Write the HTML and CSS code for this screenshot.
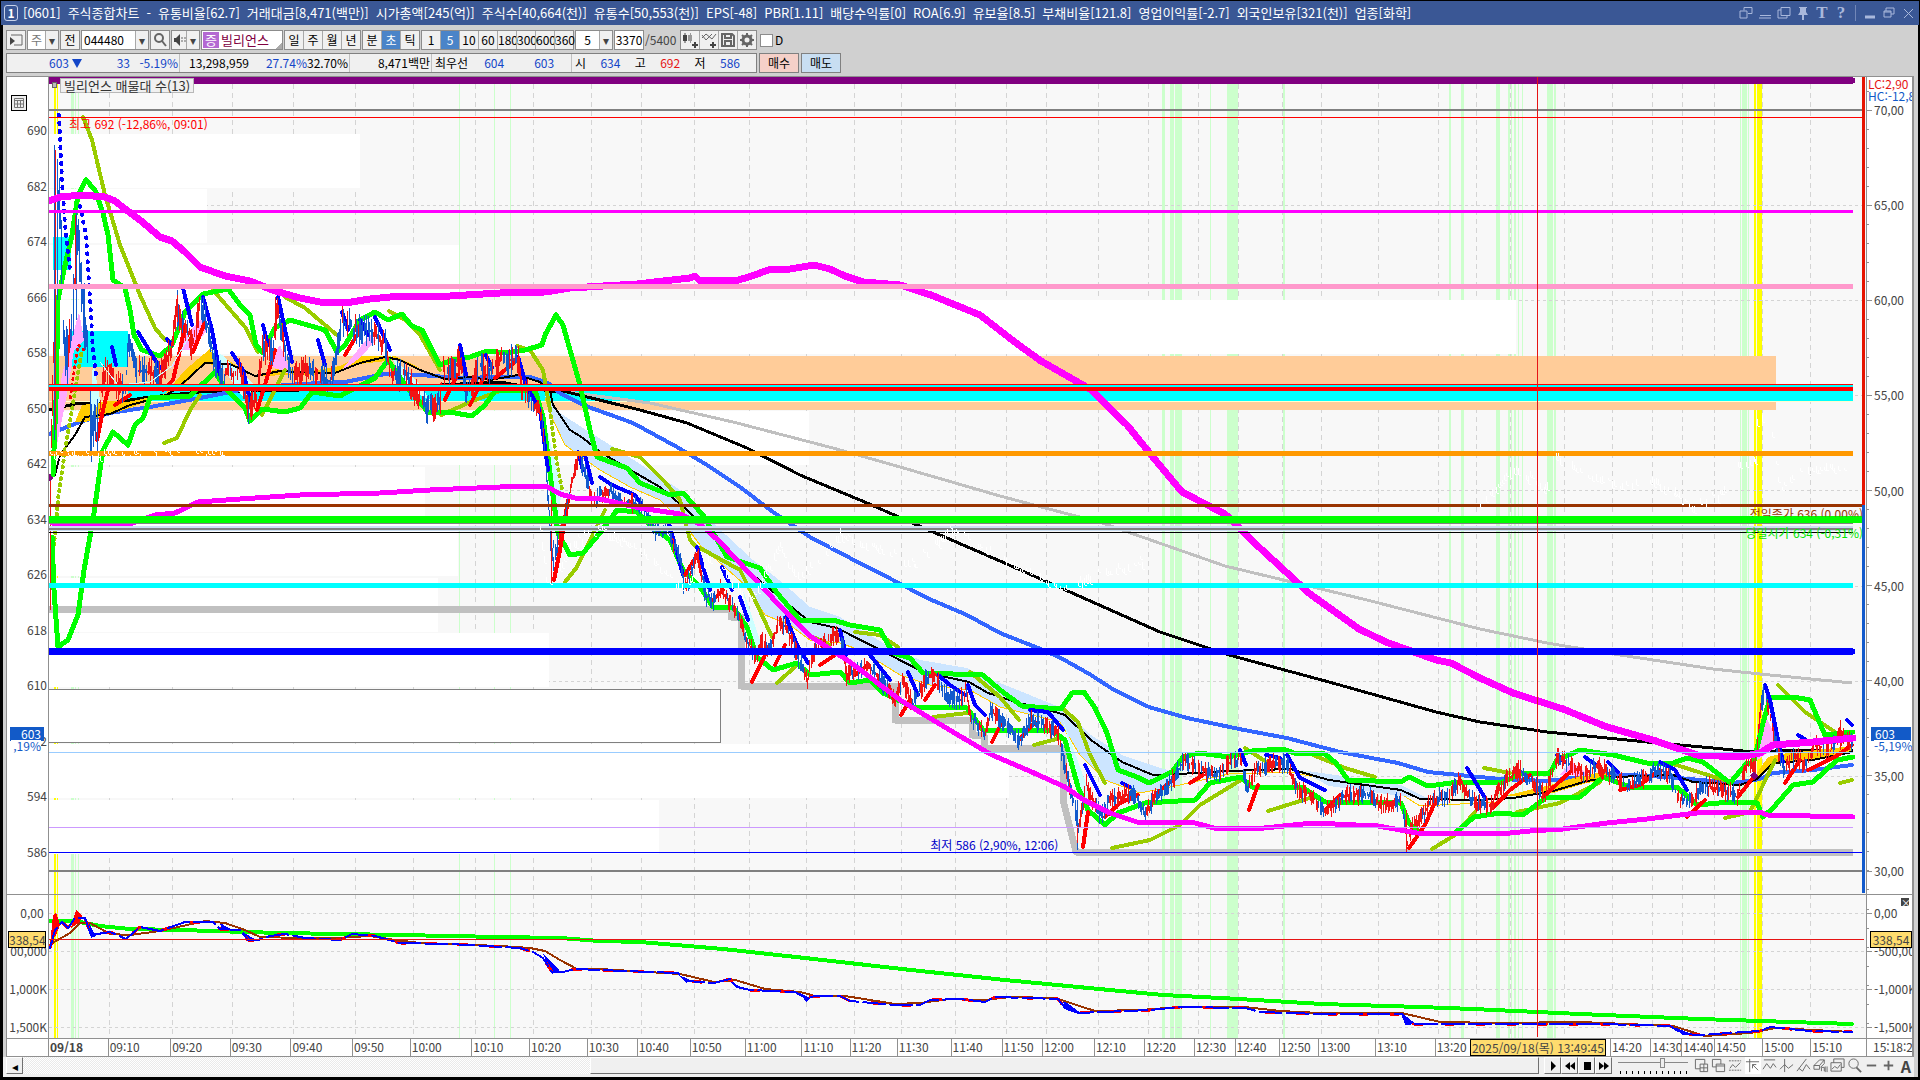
FILE: index.html
```html
<!DOCTYPE html>
<html lang="ko">
<head>
<meta charset="utf-8">
<title>[0601] 주식종합차트</title>
<link rel="stylesheet" href="styles.css">
</head>
<body>
<header class="titlebar">
  <span class="badge">1</span>
  <h1 class="title"><span>[0601]</span><span>주식종합차트</span><span>-</span><span>유통비율[62.7]</span><span>거래대금[8,471(백만)]</span><span>시가총액[245(억)]</span><span>주식수[40,664(천)]</span><span>유통수[50,553(천)]</span><span>EPS[-48]</span><span>PBR[1.11]</span><span>배당수익률[0]</span><span>ROA[6.9]</span><span>유보율[8.5]</span><span>부채비율[121.8]</span><span>영업이익률[-2.7]</span><span>외국인보유[321(천)]</span><span>업종[화학]</span></h1>
  <div class="win-tools">
    <button aria-label="창 분리"><svg width="14" height="14" viewBox="0 0 14 14"><path d="M5 1.500h8v6H9M5 1.500v3M1 5h7v7H1z"/></svg></button>
    <button aria-label="접기"><svg width="14" height="14" viewBox="0 0 14 14"><path d="M2 9.500h11M1 12h12"/></svg></button>
    <button aria-label="복사"><svg width="14" height="14" viewBox="0 0 14 14"><path d="M4 1.500h9v8H4zM4 4H1v8h9V10"/></svg></button>
    <button aria-label="고정"><svg width="14" height="14" viewBox="0 0 14 14"><path class="solid" d="M3 1h8v1h-1v4l2 3H2l2-3V2H3zM6 9h2v5H6z"/></svg></button>
    <button class="serif">T</button>
    <button class="serif">?</button>
    <i class="divider"></i>
    <button aria-label="최소화"><svg width="14" height="14" viewBox="0 0 14 14"><path d="M2 11h10" stroke-width="3"/></svg></button>
    <button aria-label="이전 크기"><svg width="14" height="14" viewBox="0 0 14 14"><path d="M4 5V2h8v6H9M2 5h7v6H2zM2 6h7"/></svg></button>
    <button aria-label="닫기"><svg width="14" height="14" viewBox="0 0 14 14"><path d="M3 3l9 9M12 3l-9 9"/></svg></button>
  </div>
</header>

<div class="window">
<nav class="toolbar">
  <button class="ctl sq" aria-label="패널"><svg width="14" height="14" viewBox="0 0 14 14"><path class="ln" d="M2 2h11v10H5"/><path d="M1 4l5 4-5 4z"/></svg></button>
  <div class="ctl group combo w32"><button class="gray">주</button><button class="arrow" aria-label="목록">▾</button></div>
  <button class="ctl sq">전</button>
  <div class="ctl group combo w68"><input class="field" value="044480" aria-label="종목코드"><button class="arrow" aria-label="종목 목록">▾</button></div>
  <button class="ctl sq" aria-label="검색"><svg width="14" height="14" viewBox="0 0 14 14"><circle class="ln2" cx="6" cy="5" r="4"/><path class="ln2" d="M9 8l4 5"/></svg></button>
  <div class="ctl group w28"><button aria-label="소리"><svg width="13" height="14" viewBox="0 0 13 14"><path d="M1 5h2l4-4v12l-4-4H1z"/><path class="ln" d="M9 4v6M12 4v6" stroke-dasharray="2 1"/></svg></button><button class="arrow" aria-label="소리 설정">▾</button></div>
  <div class="ctl group name"><span class="tag">증</span><span class="stock">빌리언스</span></div>
  <div class="ctl group w77"><button>일</button><button>주</button><button>월</button><button>년</button></div>
  <div class="ctl group w58"><button>분</button><button class="on">초</button><button>틱</button></div>
  <div class="ctl group w153"><button>1</button><button class="on">5</button><button>10</button><button>60</button><button>180</button><button>300</button><button>600</button><button>3600</button></div>
  <div class="ctl group combo w38"><input class="field mid" value="5" aria-label="주기"><button class="arrow" aria-label="주기 목록">▾</button></div>
  <div class="ctl group combo w30"><input class="field mid" value="3370" aria-label="표시 개수"></div>
  <span class="total">/5400</span>
  <div class="ctl group w77">
    <button aria-label="차트 추가"><svg width="16" height="16" viewBox="0 0 16 16"><path d="M1 3h4v6H1zM2.500 1h1v10h-1z"/><path fill="#999" d="M6 3h4v6H6zM8 1h1v10H8z"/><path d="M10 12h2v-2h2v2h2v2h-2v2h-2v-2h-2z"/></svg></button>
    <button aria-label="지표 추가"><svg width="16" height="16" viewBox="0 0 16 16"><path class="ln" d="M1 6l4-4 6 5 4-5M1 3l4 5 6-6"/><path d="M9 12h2v-2h2v2h2v2h-2v2h-2v-2H9z"/></svg></button>
    <button aria-label="저장"><svg width="16" height="16" viewBox="0 0 16 16"><path class="ln2" d="M2 2h10l2 2v10H2zM5 2v4h6V2M5 14V9h6v5"/></svg></button>
    <button aria-label="설정"><svg width="16" height="16" viewBox="0 0 16 16"><circle class="ln3" cx="8" cy="8" r="4"/><path class="ln2" d="M8 1v3M8 12v3M1 8h3M12 8h3M3 3l2 2M11 11l2 2M13 3l-2 2M5 11l-2 2"/></svg></button>
  </div>
  <label class="check"><input type="checkbox">D</label>
</nav>

<section class="quote">
  <div class="strip">
    <span class="cell c173 blue"><b>603</b><i class="tri"></i><b class="w48">33</b><b class="w48">-5.19%</b></span>
    <span class="cell c170"><b class="w68">13,298,959</b><b class="blue w58">27.74%</b><b class="w41">32.70%</b></span>
    <span class="cell c82"><b>8,471백만</b></span>
    <span class="cell c140 left"><b>최우선</b><b class="blue w36">604</b><b class="blue w50">603</b></span>
    <span class="cell c184 left spread"><b>시</b><b class="blue">634</b><b>고</b><b class="red">692</b><b>저</b><b class="blue">586</b></span>
  </div>
  <button class="trade buy">매수</button>
  <button class="trade sell">매도</button>
</section>

<main class="chart">
  <div class="axis left main-row">
    <button class="grid-btn" aria-label="표 보기"><svg width="14" height="14" viewBox="0 0 14 14"><path d="M2.500 2.500h9v9h-9zM2.500 4.500h9M2.500 8h9M5.500 4v8M8.500 4v8"/></svg></button>
    <ol class="ticks price"><li>690</li><li>682</li><li>674</li><li>666</li><li>658</li><li>650</li><li>642</li><li>634</li><li>626</li><li>618</li><li>610</li><li>602</li><li>594</li><li>586</li></ol>
    <span class="now">603</span><span class="pct">,19%</span>
  </div>
  <div class="axis left sub-row">
    <ol class="ticks vol"><li>0,00&nbsp;</li><li>00,000</li><li>1,000K</li><li>1,500K</li></ol>
    <span class="mark">338,54</span>
  </div>
  <div class="plot">
    <svg id="plot" viewBox="49 77 1817 961" preserveAspectRatio="none" shape-rendering="crispEdges"></svg>
    <i class="handle"></i>
    <span class="legend">빌리언스 매물대 수(13)</span>
    <span class="note high">최고 692 (-12,86%, 09:01)</span>
    <span class="note low">최저 586 (2,90%, 12:06)</span>
    <span class="note prev">전일종가 636 (0,00%)</span>
    <span class="note open">당일시가 634 (-0,31%)</span>
  </div>
  <div class="axis right main-row">
    <p class="lc">LC:2,90</p><p class="hc">HC:-12,86</p>
    <ol class="ticks pctscale"><li>70,00</li><li>65,00</li><li>60,00</li><li>55,00</li><li>50,00</li><li>45,00</li><li>40,00</li><li>35,00</li><li>30,00</li></ol>
    <span class="now">603</span><span class="pct">-5,19%</span>
  </div>
  <div class="axis right sub-row">
    <button class="close" aria-label="지표 닫기">×</button>
    <ol class="ticks vol"><li>0,00</li><li>-500,00</li><li>-1,000K</li><li>-1,500K</li></ol>
    <span class="mark">338,54</span>
  </div>
  <div class="corner"></div>
  <ol class="times" id="times"></ol>
  <div class="end">15:18:2</div>
</main>

<footer class="bottom">
  <div class="scroll"><button class="raised" aria-label="왼쪽">◂</button><i class="track"></i><i class="thumb"></i></div>
  <div class="play">
    <button class="raised" aria-label="재생"><svg width="12" height="10" viewBox="0 0 12 10"><path d="M4 0l5 5-5 5z"/></svg></button>
    <button class="raised" aria-label="뒤로"><svg width="12" height="10" viewBox="0 0 12 10"><path d="M6 1v8L1 5zM11 1v8L6 5z"/></svg></button>
    <button class="raised" aria-label="정지"><svg width="12" height="10" viewBox="0 0 12 10"><path d="M3 1h7v8H3z"/></svg></button>
    <button class="raised" aria-label="앞으로"><svg width="12" height="10" viewBox="0 0 12 10"><path d="M1 1v8l5-4zM6 1v8l5-4z"/></svg></button>
  </div>
  <input class="speed" type="range" min="0" max="10" step="0.1" value="6.5" aria-label="속도">
  <div class="tools">
    <button aria-label="분할"><svg viewBox="0 0 16 16"><path d="M1.500 1.500h10v10h-10z"/><path fill="#eee" d="M6.500 6.500h8v8h-8zM10.500 6.500v8M6.500 10.500h8"/></svg></button>
    <button aria-label="겹치기"><svg viewBox="0 0 16 16"><path d="M1.500 1.500h9v8h-9z"/><path fill="#eee" d="M5.500 6.500h9v8h-9zM5.500 8.500h9"/></svg></button>
    <button aria-label="영역"><svg viewBox="0 0 16 16"><path d="M1 3h13M1 13h13" stroke-dasharray="2 1"/><path d="M2 11l3-4 3 3 5-5"/></svg></button>
    <button class="on" aria-label="십자선"><svg viewBox="0 0 16 16"><path d="M1 4h14M5 1v14M8 7l6 6M8 7h4M8 7v4"/></svg></button>
    <button aria-label="수평선"><svg viewBox="0 0 16 16"><path d="M2 2h12M1 12l4-6 4 5 3-5 3 4"/></svg></button>
    <button aria-label="수직선"><svg viewBox="0 0 16 16"><path d="M6 1v14M1 12l5-5 4 4 5-4"/></svg></button>
    <button aria-label="추세선"><svg viewBox="0 0 16 16"><path d="M1 14L11 1M3 11l4 3 4-7 4 5"/></svg></button>
    <button aria-label="모두 지우기"><svg viewBox="0 0 16 16"><path d="M1 8l6-6h5l-5 6v4H1zM1 8h6M12 2v4l-4 4M9 14v-4h3v4M13 9v6M15 9v6"/></svg></button>
    <button aria-label="그림"><svg viewBox="0 0 16 16"><path d="M4 5V1h11v9h-3M1 5h11v9H1zM2 12l3-3 3 2 3-4"/></svg></button>
    <button aria-label="돋보기"><svg viewBox="0 0 16 16"><circle cx="7" cy="6" r="5"/><path d="M10 10l5 5" stroke-width="2"/></svg></button>
    <button aria-label="축소"><svg viewBox="0 0 16 16"><path d="M3 8h10" stroke-width="2"/></svg></button>
    <button aria-label="확대"><svg viewBox="0 0 16 16"><path d="M3 8h10M8 3v10" stroke-width="2"/></svg></button>
    <button class="auto">A</button>
  </div>
</footer>
</div>
<script src="chart.js"></script>
</body>
</html>
```
FILE: styles.css
```css
* { box-sizing: border-box; margin: 0; padding: 0; }
html, body { height: 100%; }
body {
  display: flex; flex-direction: column; min-height: 480px; padding: 1px 1px 3px 3px;
  background: #000; color: #000; overflow: hidden;
  font: 12px/16px "Liberation Sans Narrow", "Noto Sans CJK KR", sans-serif;
}
button, input { font: inherit; color: inherit; border: 0; background: none; border-radius: 0; min-width: 0; }
ol { list-style: none; }
i { font-style: normal; }
b { font-weight: normal; }

.titlebar { display: flex; align-items: center; flex: none; height: 24px; margin-left: -2px; padding: 0 4px 0 3px; background: #3a5795; color: #fff; }
.badge { width: 14px; height: 16px; line-height: 14px; border: 1px solid #c8d2ea; border-radius: 3px; text-align: center; font-weight: bold; }
.title { display: flex; flex: 1; gap: 7px; margin-left: 5px; font-size: 13px; font-weight: normal; white-space: nowrap; }
.win-tools { display: flex; align-items: center; gap: 5px; color: #a9b8dc; }
.win-tools button { width: 14px; height: 16px; }
.win-tools svg { display: block; fill: none; stroke: #a9b8dc; }
.win-tools .solid { fill: #a9b8dc; stroke: none; }
.win-tools .divider { width: 1px; height: 16px; margin: 0 2px; background: #7287b8; }
.win-tools .serif { font: bold 17px/16px "Liberation Serif", serif; }

.window { display: flex; flex: 1; flex-direction: column; min-height: 0; margin-right: 1px; background: #d0d0d0; }
.toolbar { display: flex; flex: none; gap: 1px; height: 28px; padding: 5px 3px 3px; }
.ctl { height: 20px; border: 1px solid #8c8c8c; background: #f0f0f0; }
.ctl svg { display: block; margin: auto; fill: #444; }
.ctl .ln, .ctl .ln2, .ctl .ln3 { fill: none; stroke: #666; }
.ctl .ln2 { stroke-width: 2; }
.ctl .ln3 { stroke-width: 3; }
.sq { width: 20px; }
.group { display: flex; align-items: stretch; }
.group button { flex: 1; white-space: nowrap; overflow: visible; }
.group button + button { border-left: 1px solid #a8a8a8; }
.group .arrow { flex: 0 0 13px; border-left: 1px solid #a8a8a8; background: #f0f0f0; color: #444; }
.group .on { background: #4a84c8; color: #fff; }
.combo { background: #fff; }
.gray { color: #777; }
.field { flex: 1; width: 0; padding: 0 2px; }
.mid { text-align: center; padding: 0; }
.w28 { width: 29px; } .w30 { width: 30px; } .w32 { width: 32px; } .w38 { width: 38px; }
.w58 { width: 58px; } .w68 { width: 68px; } .w77 { width: 77px; } .w153 { width: 153px; }
.name { width: 82px; gap: 2px; padding: 1px; color: #800040; font-size: 13px; background: linear-gradient(135deg, #fff 93%, #aaa 93%); }
.tag { width: 16px; background: #b469d2; color: #fff; text-align: center; }
.total { width: 34px; line-height: 20px; color: #444; }
.check { display: flex; align-items: center; gap: 2px; margin-left: 2px; }
.check input { appearance: none; width: 13px; height: 13px; border: 1px solid #8c8c8c; background: #fff; }

.quote { display: flex; flex: none; gap: 2px; height: 23px; padding: 0 3px 3px; }
.strip { display: flex; width: 751px; border: 1px solid #808080; background: #f0f0f0; }
.cell { display: flex; align-items: center; justify-content: flex-end; padding: 0 1px; border-right: 1px solid #c0c0c0; white-space: nowrap; text-align: right; }
.cell.left { justify-content: flex-start; padding-left: 3px; }
.cell.spread { flex: 1; justify-content: space-between; padding-right: 16px; border: 0; }
.c173 { width: 173px; } .c170 { width: 170px; } .c82 { width: 82px; } .c140 { width: 140px; } .c184 { width: 184px; }
.strip .w36 { width: 36px; } .strip .w41 { width: 41px; } .strip .w48 { width: 48px; } .strip .w50 { width: 50px; }
.strip .w58 { width: 58px; }
.blue { color: #1446c8; } .red { color: #e61414; }
.tri { margin-left: 3px; border: 5px solid transparent; border-top: 9px solid #1446c8; border-bottom: 0; }
.trade { width: 40px; border: 1px solid #808080; }
.buy { background: #f5d0c8; } .sell { background: #c8def2; }

.chart {
  display: grid; flex: 1; min-height: 0; margin: 0 4px 0 3px; background: #fff;
  grid-template: minmax(0, 817fr) minmax(0, 144fr) 18px / 42px minmax(0, 1fr) 46px;
  border: 1px solid #909090; border-width: 1px 2px 1px 1px; color: #444;
}
.axis { position: relative; display: flex; flex-direction: column; overflow: hidden; }
.axis.left { grid-column: 1; border-right: 1px solid #909090; text-align: right; }
.axis.right { grid-column: 3; border-left: 1px solid #909090; }
.main-row { grid-row: 1; }
.sub-row { grid-row: 2; border-top: 1px solid #909090; }
.ticks { display: flex; flex: 1; flex-direction: column; justify-content: space-between; line-height: 14px; }
.left .ticks { padding-right: 1px; }
.price { margin: 46px 0 35px; }
.pctscale { margin: 26px 0 16px; }
.vol { margin: 11px 0 4px; }
.right li { display: flex; align-items: center; gap: 2px; white-space: nowrap; }
.right li::before { content: ""; flex: none; width: 5px; height: 1px; background: #909090; }
.right { background: repeating-linear-gradient(to bottom, #909090 0 1px, transparent 1px 19px) 0 14px / 2px 100% no-repeat; }
.now, .pct, .mark, .lc, .hc, .grid-btn, .close { position: absolute; }
.now { top: 79.6%; left: 3px; width: 34px; height: 14px; padding-right: 3px; background: #125ac8; color: #fff; line-height: 14px; }
.pct { top: 81.2%; left: 4px; width: 34px; line-height: 12px; color: #125ac8; background: #fff; }
.left .pct { width: 30px; }
.right .now { left: 4px; width: 40px; padding: 0 4px; }
.right .pct { left: 7px; width: 36px; }
.mark { top: 25%; left: 1px; width: 38px; height: 17px; border: 1px solid #000; background: #ffdc6e; line-height: 15px; text-align: center; }
.right .mark { left: 3px; width: 42px; }
.lc, .hc { left: 1px; line-height: 12px; }
.lc { top: 1px; color: #e61414; } .hc { top: 13px; color: #125ac8; }
.grid-btn { top: 19px; left: 5px; width: 14px; height: 14px; outline: 1px solid #000; background: #eee; }
.grid-btn svg { display: block; fill: none; stroke: #777; }
.close { top: 3px; right: 3px; width: 8px; height: 8px; background: #444; color: #fff; font-size: 10px; line-height: 7px; }

.plot { position: relative; grid-area: 1 / 2 / 3 / 3; overflow: hidden; background: #f8f8f8; }
.plot svg { position: absolute; width: 100%; height: 100%; }
.handle { position: absolute; top: 5px; left: 3px; width: 5px; height: 6px; border: 1px solid #666; background: #bbb; }
.legend { position: absolute; top: 1px; left: 11px; padding: 0 3px; border: 1px solid #b8b8b8; background: #f0f0f0; font-size: 13px; line-height: 13px; white-space: nowrap; color: #333; }
.note { position: absolute; line-height: 14px; white-space: nowrap; }
.high { top: 4.2%; left: 20px; color: #f00; }
.low { top: 79.2%; left: 48.5%; color: #0000c8; }
.prev { top: 44.7%; right: 3px; color: #993300; clip-path: inset(0 0 4px); }
.open { top: 46.7%; right: 3px; color: #00e600; }

.corner, .times, .end { grid-row: 3; border-top: 1px solid #909090; line-height: 16px; }
.corner { border-right: 1px solid #909090; }
.times { position: relative; display: flex; }
.times li { flex: var(--w) 0 0; min-width: 0; padding-left: 1px; border-left: 1px solid #909090; white-space: nowrap; overflow: hidden; }
.times li:first-child { border: 0; font-weight: bold; }
.times .stamp { position: absolute; top: 0; left: 78.2%; width: 136px; height: 17px; padding: 0; overflow: visible; border: 1px solid #000; background: #ffdc6e; line-height: 15px; text-align: center; font-weight: normal; }
.end { padding-left: 6px; overflow: hidden; border-left: 1px solid #909090; }

.bottom { display: flex; flex: none; height: 20px; margin-right: 4px; padding: 0 0 3px 3px; background: #f0f0f0; }
.scroll { display: flex; flex: 1; background: repeating-conic-gradient(#fff 0 25%, #eaeaea 0 50%) 0 0 / 2px 2px; }
.raised { width: 17px; height: 17px; border: 1px solid; border-color: #fff #707070 #707070 #fff; background: #f0f0f0; line-height: 12px; }
.track { flex: 568; }
.thumb { flex: 950; border: 1px solid; border-color: #fff #707070 #707070 #fff; background: #f0f0f0; }
.play { display: flex; margin-left: 5px; }
.play svg { display: block; margin: auto; }
.speed {
  appearance: none; width: 70px; height: 17px; margin: 0 6px;
  background: linear-gradient(#888, #888) 0 5px / 100% 1px no-repeat, repeating-linear-gradient(to right, #000 0 1px, transparent 1px 6px) 2px 14px / 100% 3px no-repeat;
}
.speed::-webkit-slider-thumb { appearance: none; width: 5px; height: 10px; margin-top: -5px; border: 1px solid #888; background: #eee; }
.tools { display: flex; width: 220px; justify-content: space-between; }
.tools button { width: 16px; height: 17px; }
.tools .on { background: #fff; }
.tools svg { display: block; width: 15px; height: 15px; fill: none; stroke: #666; }
.tools .auto { font-weight: bold; font-size: 16px; color: #444; }
```
FILE: chart.js
```js
const NS = 'http://www.w3.org/2000/svg';
const svg = document.getElementById('plot');
const R = 1853, FULL = 1864;

function add(tag, attrs) {
  const el = document.createElementNS(NS, tag);
  for (const k in attrs) el.setAttribute(k, attrs[k]);
  svg.appendChild(el);
}
const rect = (x, y, w, h, fill) => add('rect', { x, y, width: w, height: h, fill });
const line = (d, stroke, w, extra) => add('path', Object.assign({ d, stroke, 'stroke-width': w, fill: 'none', 'stroke-linejoin': 'round' }, extra));
const curve = (pts, stroke, w, extra) => line('M' + pts, stroke, w, Object.assign({ 'stroke-linecap': 'round' }, extra));
const poly = (pts, fill) => add('polygon', { points: pts, fill });
const hl = (y, c, w, x1 = 49, x2 = R) => rect(x1, y, x2 - x1, w, c);

let seed = 7;
function rnd() { seed = (seed * 16807) % 2147483647; return seed / 2147483647; }

/* time axis */
const marks = [49, 109, 172, 232, 293, 355, 413, 475, 533, 591, 641, 694, 749, 806, 854, 901, 955, 1006, 1046, 1098, 1148, 1198, 1238, 1282, 1321, 1378, 1438, 1476, 1510, 1564, 1612, 1652, 1682, 1714, 1762, 1810, 1866];
const names = ['09/18', '09:10', '09:20', '09:30', '09:40', '09:50', '10:00', '10:10', '10:20', '10:30', '10:40', '10:50', '11:00', '11:10', '11:20', '11:30', '11:40', '11:50', '12:00', '12:10', '12:20', '12:30', '12:40', '12:50', '13:00', '13:10', '13:20', '', '', '', '14:20', '14:30', '14:40', '14:50', '15:00', '15:10'];
document.getElementById('times').innerHTML = names.map((n, i) => `<li style="--w:${marks[i + 1] - marks[i]}">${n}</li>`).join('') + '<li class="stamp">2025/09/18(목) 13:49:45</li>';

/* grid and session bands */
[[71, 3], [75, 1], [78, 1], [459, 1], [494, 1], [510, 1], [1162, 3], [1170, 4], [1175, 7], [1210, 1], [1227, 11], [1283, 2], [1449, 2], [1461, 3], [1496, 4], [1508, 2], [1511, 1], [1514, 2], [1518, 1], [1522, 1], [1547, 6], [1554, 2], [1740, 1], [1742, 5], [1748, 1]].forEach(b => rect(b[0], 77, b[1], 961, '#ccffcc'));
[[54, 2], [57, 1], [1754, 2], [1757, 5]].forEach(b => rect(b[0], 77, b[1], 961, '#ffff00'));
const dash = { 'stroke-dasharray': '5 4' };
marks.slice(1, -1).forEach(x => line(`M${x}.5 84V1038`, '#d4d4d4', 1, dash));
[110, 205, 300, 395, 490, 586, 681, 776, 871, 913, 951, 989, 1027].forEach(y => line(`M49 ${y}.5H1864`, '#d4d4d4', 1, { 'stroke-dasharray': '3 3' }));

/* volume by price */
[[134, 360], [189, 207], [245, 459], [300, 1516], [411, 809], [467, 425], [522, 458], [578, 438], [633, 549], [744, 1009], [800, 659]].forEach(b => rect(49, b[0], b[1] - 49, 54, '#fff'));
rect(49, 356, 1727, 54, '#ffcc99');
add('rect', { x: 40.5, y: 689.5, width: 680, height: 53, fill: '#fff', stroke: '#808080' });

/* level lines */
rect(53, 237, 18, 33, '#00ffff'); rect(72, 331, 56, 36, '#00ffff');
hl(391, '#00ffff', 10, 128); hl(401, '#ffffcc', 1);
line('M49 609H731V617H741V686H895V720H972V735H984V748H1063V800L1076 852H1853', '#c0c0c0', 7);
line('M567 392L650 403 733 422 833 448 900 467 1000 496 1102 523 1225 566 1367 600 1480 629 1547 643 1620 655 1713 669 1760 674 1852 683', '#c0c0c0', 3);
curve('49 410 75 404 110 403 150 397 200 392 300 390 400 387 500 382 550 391 567 392 640 410 687 423 747 448 800 475 867 503 917 525 1000 561 1088 600 1160 632 1229 655 1329 682 1436 712 1480 722 1547 732 1647 742 1713 748 1753 752 1797 750 1852 750', '#000', 3);
curve('49 434 80 422 110 413 150 407 200 398 250 388 300 384 345 382 385 374 420 375 460 378 500 377 530 377 548 383 560 393 583 405 633 423 677 447 707 465 740 487 773 512 810 537 850 558 893 580 927 598 967 615 1000 633 1038 648 1061 658 1091 675 1114 690 1149 707 1187 718 1244 730 1287 738 1340 752 1398 763 1428 772 1500 779 1547 781 1607 774 1667 777 1733 783 1760 779 1773 773 1813 770 1852 765', '#3366ff', 4);

/* clouds */
poly('545 395 560 413 583 428 623 453 680 490 713 523 753 560 783 583 810 607 840 617 890 647 920 660 967 668 1000 683 1062 708 1091 735 1122 755 1160 768 1180 773 1180 785 1140 793 1105 780 1080 755 1060 722 1000 707 970 690 930 685 900 675 860 650 840 643 810 640 790 625 765 615 745 585 700 545 685 525 660 500 630 487 600 470 583 458 565 445 553 420', '#cce5ff');
curve('545 398 553 420 565 445 583 458 600 470 630 487 660 500 685 525 700 545 745 585 765 615 790 625 810 640 840 643 860 650 900 675 930 685 970 690 1000 707 1060 722 1080 755 1105 780 1140 793 1180 785 1229 774 1290 772 1401 794 1420 806 1500 802', '#ffcc00', 1);
poly('1300 770 1329 774 1401 785 1425 797 1440 800 1401 796 1329 786', '#cce5ff');
poly('75 422 82 405 110 401 128 402 165 394 185 370 210 349 228 360 240 368 228 366 205 364 180 388 130 408 85 422', '#ffcc00');
poly('255 376 285 366 300 373 340 366 360 356 395 356 420 368 395 360 360 364 335 374', '#ffcc00');
poly('1500 797 1550 785 1587 774 1613 772 1613 778 1587 783 1553 793', '#ffcc00');
poly('1752 780 1768 757 1780 754 1852 746 1852 752 1813 760 1773 764', '#ffcc00');
poly('51 480 58 400 62 375 79 312 84 340 74 350 66 400 56 450', '#ffaaff');
poly('170 372 185 335 203 317 207 330 192 350 182 350', '#ffaaff');
poly('268 365 280 345 292 375', '#ffaaff'); poly('340 372 370 335 376 340 360 358', '#ffaaff');
poly('1750 765 1765 715 1778 740 1775 748', '#ffaaff'); poly('1560 775 1572 762 1590 776', '#ffaaff');
poly('93 360 100 400 90 420', '#ccffff'); poly('545 420 562 490 556 530', '#ccffff'); poly('210 350 222 355 255 385 245 400', '#ccffff');
poly('390 355 420 385 430 400 410 390', '#ccffff'); poly('1063 720 1092 800 1084 800', '#ccffff'); poly('743 590 765 655 755 650', '#ccffff');
curve('55 475 60 455 75 435 85 417 110 414 130 405 165 396 180 386 205 363 230 364 255 376 280 371 300 372 335 373 360 363 385 357 400 360 420 370 445 379 470 377 490 380 518 375 540 382 550 390 553 405 570 430 583 438 600 452 627 468 660 487 687 510 713 537 747 570 783 600 810 622 837 628 890 655 923 672 969 682 988 693 1019 703 1042 708 1065 715 1091 740 1122 762 1153 775 1179 774 1229 771 1290 769 1329 780 1401 790 1420 799 1480 800 1513 798 1553 791 1587 781 1613 777 1673 775 1693 782 1740 785 1757 779 1773 763 1813 760 1852 752', '#000', 2);

/* olive trails */
['83 117 92 140 105 195 120 245 140 295 155 328 165 340', '213 290 245 327 258 352', '285 297 305 308 338 336', '164 443 177 438 190 410 200 395', '262 415 285 370', '389 311 405 320 420 335 440 370', '441 415 475 400 500 391', '517 346 530 350 543 370 550 410', '565 582 577 567 590 540 605 510', '612 449 640 457 665 482 680 500 690 540 697 548', '700 548 740 570 755 600 772 637', '777 683 797 665', '815 638 830 645', '855 632 880 635 898 647', '933 717 967 713', '970 672 1000 697 1019 720', '1034 745 1060 738', '1061 707 1078 722 1090 755 1105 783', '1112 848 1150 840 1180 825 1200 805 1241 780', '1245 748 1268 763', '1268 811 1313 797', '1313 755 1345 768 1375 777', '1432 849 1455 835 1475 812', '1484 768 1510 773', '1517 812 1560 803 1600 782', '1670 763 1730 782', '1725 818 1750 812 1775 760', '1778 685 1805 712 1835 732', '1840 783 1852 780'].forEach(p => curve(p, '#99cc00', 4));
['54 545 58 500 65 450 72 410 82 350', '550 410 555 450 562 490'].forEach(p => curve(p, '#99cc00', 4, { 'stroke-dasharray': '1 5' }));

/* bands */
curve('53 475 56 400 58 300 64 270 72 235 78 195 86 180 95 190 103 213 108 235 113 280 125 288 130 310 134 335 142 350 160 356 172 345 185 312 203 294 228 289 240 305 250 315 256 345 262 352 275 328 290 320 325 330 337 352 345 345 360 320 375 312 388 320 402 314 412 326 422 330 430 346 440 365 452 360 470 357 487 351 505 353 525 350 542 345 545 335 556 315 563 325 570 350 580 385 590 430 597 457 627 468 640 483 670 495 683 493 703 515 727 557 760 568 777 593 800 620 833 620 850 625 880 630 893 653 910 658 923 673 983 675 1000 690 1022 706 1061 709 1072 693 1084 692 1095 708 1107 733 1118 770 1137 777 1149 783 1172 772 1183 757 1199 753 1229 757 1252 751 1283 749 1294 753 1325 754 1336 763 1348 780 1401 782 1409 777 1428 786 1459 782 1500 783 1523 773 1550 773 1557 760 1580 750 1613 755 1647 763 1673 763 1687 758 1703 762 1730 783 1747 763 1753 765 1763 723 1770 698 1793 697 1810 700 1825 735 1853 732', '#00ff00', 5);
curve('52 537 54 590 58 647 68 640 78 615 84 570 93 520 100 470 103 450 113 432 128 445 135 425 143 418 150 398 190 396 215 372 225 388 245 408 250 421 262 409 285 412 300 408 312 392 340 396 375 378 388 360 405 385 418 400 428 412 455 413 472 416 485 405 495 391 535 390 543 417 550 473 558 533 570 555 583 553 600 533 617 510 637 512 650 525 670 540 683 570 700 587 713 607 733 607 747 627 757 657 773 670 797 663 810 675 840 672 850 683 870 680 883 693 913 707 967 708 983 730 1053 731 1065 740 1078 787 1088 810 1105 825 1118 813 1145 803 1195 800 1210 783 1241 777 1252 787 1302 787 1325 802 1401 803 1409 823 1420 833 1455 833 1474 817 1500 813 1523 815 1547 797 1580 797 1603 777 1630 787 1677 787 1697 805 1730 802 1757 803 1763 817 1773 808 1793 785 1813 782 1837 760 1853 757', '#00ff00', 5);

/* price bars: short ticks scattered round the traded path */
const price = [50,480,53,350,54,150,57,190,60,220,62,335,68,355,72,330,76,225,82,300,88,350,90,430,97,430,102,380,108,365,115,385,125,390,128,340,135,370,160,375,170,350,177,310,185,330,192,345,200,305,208,330,215,370,225,375,240,370,248,410,256,395,262,350,272,350,277,310,285,350,292,380,305,370,315,375,322,380,330,380,338,340,342,320,355,330,370,330,385,345,390,375,405,375,420,400,428,410,440,400,443,370,455,365,460,360,465,390,473,385,478,365,490,370,500,360,518,360,521,385,530,400,541,415,546,480,550,540,553,565,558,540,563,520,570,490,578,455,585,475,592,500,600,495,610,490,620,500,640,505,655,530,670,535,680,560,684,590,690,575,697,555,705,595,713,600,720,590,728,600,738,615,745,640,755,655,762,640,770,650,777,625,785,625,797,655,807,680,812,655,820,645,835,635,842,640,846,675,855,670,867,665,880,680,895,700,902,680,912,705,925,680,935,675,945,695,960,700,965,690,970,715,985,735,990,712,1000,720,1010,730,1019,740,1030,720,1045,725,1058,735,1065,770,1075,810,1077,840,1080,820,1086,785,1090,795,1100,815,1110,800,1125,795,1135,795,1145,815,1155,795,1165,790,1175,775,1183,760,1200,770,1215,775,1230,762,1240,760,1247,790,1255,770,1270,765,1285,762,1297,790,1310,795,1325,810,1335,805,1345,795,1370,795,1380,805,1400,800,1405,830,1406,845,1412,825,1420,820,1430,800,1450,795,1460,780,1470,800,1490,805,1505,780,1520,770,1545,795,1557,758,1570,765,1585,775,1597,765,1610,775,1625,785,1640,780,1655,770,1670,775,1677,800,1690,800,1705,785,1720,790,1738,795,1745,765,1755,765,1760,710,1764,690,1768,710,1775,740,1783,770,1795,755,1805,765,1815,745,1830,750,1840,735,1850,740];
const sar = [
  ['#0000ff', ['112 347 116 365', '138 332 160 368', '167 339 172 345', '183 288 192 325', '203 297 212 330 220 375', '232 353 243 370 250 400', '263 325 268 345', '278 297 292 362', '318 340 325 365', '342 312 348 330', '360 320 368 335', '375 317 390 350', '460 345 466 375', '486 355 492 368', '518 357 526 385 540 410 548 470', '578 452 583 470', '585 455 592 483', '600 477 612 485 635 495 645 510', '668 520 683 575', '697 547 710 590', '722 567 732 590', '740 597 748 620', '786 617 797 645 808 663', '840 630 846 655', '870 655 890 680', '908 672 918 695', '938 675 950 685 965 695', '968 685 975 705 985 715', '1030 710 1048 712 1063 730', '1085 765 1100 795', '1122 783 1130 787', '1240 750 1246 765', '1266 755 1280 758', '1287 755 1300 778 1325 790', '1467 768 1485 798', '1557 755 1565 762', '1585 757 1600 768', '1608 762 1618 772', '1660 762 1675 770 1687 790', '1765 685 1770 700 1778 740 1783 762', '1798 735 1806 740', '1847 720 1852 725']],
  ['#ff0000', ['97 440 103 410 108 390', '115 405 130 395', '163 390 173 380 180 350 185 325', '193 352 205 322', '257 410 265 385 275 350', '345 355 360 330', '445 400 457 375', '470 405 485 375', '495 378 515 362', '554 580 560 550 568 500', '685 575 697 555', '713 600 723 590', '752 682 765 655', '775 665 785 645', '820 665 835 655', '855 675 868 665', '901 715 910 700', '925 700 935 685', '992 742 1003 720', '1019 740 1035 722', '1083 847 1088 812', '1105 817 1120 803 1138 795', '1155 795 1175 778', '1190 783 1203 775', '1249 810 1258 785', '1327 808 1340 795', '1409 848 1425 825 1436 800', '1493 808 1510 790 1530 775', '1543 797 1570 772', '1620 790 1640 785 1660 770', '1687 817 1705 800', '1738 797 1755 775', '1785 783 1800 760', '1808 770 1835 757 1852 745']]
];
sar.forEach(s => s[1].forEach(p => curve(p, s[0], 4)));
['59 115 62 180 65 225 70 270', '80 206 86 235 90 300 93 350 96 375'].forEach(p => curve(p, '#0000ff', 4, { 'stroke-dasharray': '1 7' }));
curve('84 350 78 345 70 400', '#ff0000', 3, { 'stroke-dasharray': '1 5' });

let red = '', blue = '', k = 0, last = 480, up = true;
for (let x = 50; x < 1853; x += 1) {
  while (k < price.length - 4 && price[k + 2] < x) k += 2;
  const t = (x - price[k]) / (price[k + 2] - price[k]);
  const y = Math.round(price[k + 1] + t * (price[k + 3] - price[k + 1]));
  const amp = x < 100 ? 34 : x < 530 ? 17 : 11;
  const a = y - Math.round(rnd() * amp), b = y + Math.round(rnd() * amp);
  const s = `M${x}.5 ${Math.min(a, last)}V${Math.max(b, Math.min(a, last) + 2)}`;
  if (rnd() < 0.4) up = rnd() < (y < last ? 0.7 : 0.45);
  if (rnd() < 0.88) { if (up) red += s; else blue += s; }
  last = y;
}
line(blue + 'M54.5 145V440M57.5 160V300M76.5 210V320M553.5 540V548M1077.5 800V850M177.5 290V330', '#125acc', 1);
line(red + 'M50.500 480V610M55.5 150V430M75.5 215V290M551.5 500V583M275.5 297V340M1406.5 810V852M1840.5 720V750', '#f01414', 1);
curve('100 362 118 385 150 382 172 366 190 335', '#ccffff', 1);

/* main trend lines */
curve('52 523 75 523 90 525 130 524 155 515 175 513 198 502 240 499 300 495 380 493 430 490 500 487 546 486 560 494 575 498 600 499 640 508 680 514 700 524 720 542 750 574 780 606 810 636 850 662 900 700 938 723 990 754 1034 773 1065 787 1084 800 1110 813 1137 822 1191 822 1214 828 1264 828 1313 823 1378 826 1417 833 1500 834 1530 831 1563 829 1607 823 1647 819 1697 813 1760 812 1767 815 1853 817', '#ff00ff', 5);
curve('49 201 60 197 82 195 105 197 115 201 125 209 140 220 160 237 172 241 185 252 200 267 225 276 250 281 275 291 300 298 320 302 345 303 370 299 400 296 450 296 500 293 545 292 570 288 637 284 690 278 695 276 700 281 710 280 735 281 752 276 771 269 790 269 814 265 830 269 845 276 863 282 900 285 931 295 980 315 1016 343 1041 361 1090 389 1127 425 1157 462 1182 492 1225 514 1261 549 1310 594 1359 629 1386 642 1436 660 1451 663 1480 678 1513 693 1563 709 1607 727 1653 740 1697 755 1740 757 1760 753 1773 745 1813 742 1853 738', '#ff00ff', 7);

hl(77, '#800080', 7); rect(R, 78, 2, 5, '#800080');
hl(109, '#808080', 2, 49, FULL); hl(117, '#ff0000', 1, 49, FULL);
hl(210, '#ff00ff', 3); hl(284, '#ff99cc', 5);
hl(384, '#ff0000', 1); hl(385, '#00ffff', 2); hl(387, '#ff0000', 4);
hl(451, '#ff9900', 5); hl(504, '#993300', 3, 49, FULL);
hl(516, '#00ff00', 7, 49, FULL); hl(523, '#808080', 1); hl(526, '#cce0f5', 5); hl(528, '#808080', 2); hl(532, '#000', 1);
hl(583, '#00ffff', 5); hl(648, '#0000ff', 7); rect(R, 649, 2, 5, '#0000ff');
hl(752, '#99ccff', 1); hl(827, '#cc99ff', 1); hl(852, '#0000ff', 1, 49, FULL); hl(870, '#808080', 2, 49, FULL);

/* faint white trace */
const faint = [[540,530,546,580,552,590,570,545,600,530,640,550,680,590,710,560,750,600,780,550,800,580,840,535,880,550,915,565,950,530,1000,560,1060,590,1150,560], [1480,510,1500,485,1520,470,1545,490,1556,455,1580,475,1610,480,1620,490,1650,480,1675,495,1690,510,1720,495,1740,465,1755,460,1758,410,1772,440,1780,495,1800,470,1850,472], [50,455,80,455,100,457,175,455,180,447,200,453,225,458]];
faint.forEach((f, n) => {
  let d = '';
  for (let i = 0; i < f.length - 2; i += 2) for (let x = f[i]; x < f[i + 2]; x += 2) {
    const y = f[i + 1] + (x - f[i]) / (f[i + 2] - f[i]) * (f[i + 3] - f[i + 1]);
    if (rnd() < 0.55) d += `M${x}.5 ${Math.round(y - rnd() * 8)}v${2 + Math.round(rnd() * (n === 2 ? 3 : 6))}h2`;
  }
  line(d, '#fff', 1);
});
poly('50 473 53 478 50 482 47 478', '#800080'); poly('1754 771 1758 776 1754 780 1750 776', '#800080');

/* indicator pane */
rect(49, 894, 1817, 1, '#909090');
curve('49 921 75 921 100 926 130 929 180 930 280 933 400 935 500 937 560 938 600 941 640 942 676 945 723 949 805 958 911 970 1005 980 1099 989 1163 995 1239 999 1322 1004 1420 1007 1473 1009 1580 1014 1700 1019 1852 1024', '#00ff00', 4);
['50 945 53 915 56 912 60 925 56 935', '71 928 76 910 82 916 80 922'].forEach(p => poly(p, '#ff0000'));
['87 920 91 938 96 936', '220 923 222 929 232 930', '243 932 248 942 256 940', '543 954 552 974 560 970', '679 975 686 983 690 980', '729 980 736 988 742 988', '800 993 806 1002 810 998', '1062 999 1066 1010 1082 1014', '1403 1014 1406 1025 1416 1024', '1674 1027 1682 1034 1694 1035'].forEach(p => poly(p, '#0000ff'));
const brown = '49 945 70 933 80 923 90 923 110 934 130 935 160 931 205 921 225 923 245 930 260 937 300 938 335 938 370 936 395 940 420 943 500 946 530 948 545 951 560 960 577 969 600 969 680 974 714 982 735 980 765 989 800 992 815 996 845 996 895 1004 920 1003 950 999 985 1000 1010 997 1055 998 1095 1011 1140 1010 1180 1007 1245 1007 1280 1011 1320 1013 1402 1013 1440 1022 1500 1023 1580 1022 1673 1026 1705 1036 1750 1033 1775 1028 1852 1032';
const flow = '50 948 55 930 62 922 68 928 75 918 85 918 91 935 110 932 126 939 140 927 160 931 185 922 213 922 220 929 240 930 248 940 258 940 270 936 285 934 305 938 340 940 352 934 375 936 400 943 450 944 520 948 533 952 543 958 552 972 563 972 575 969 650 972 678 973 687 981 714 983 730 979 737 987 750 990 795 992 806 998 815 996 840 996 850 1001 895 1005 920 1005 930 1000 960 999 985 1002 995 997 1058 999 1065 1008 1078 1013 1150 1010 1180 1007 1245 1008 1260 1012 1320 1014 1402 1014 1406 1024 1500 1024 1600 1024 1670 1026 1683 1034 1700 1035 1760 1031 1770 1027 1810 1031 1852 1032';
curve(brown, '#993300', 2);
curve(flow, '#ff0000', 3, { 'stroke-dasharray': '9 22' });
curve(flow, '#0000ff', 2, { 'stroke-dasharray': '22 5' });

/* cursor and side gauge */
rect(49, 939, 1815, 1, '#e61414'); rect(1537, 77, 1, 960, '#e61414');
rect(1862, 77, 3, 428, '#e61400'); rect(1862, 505, 3, 388, '#125acc');
```
